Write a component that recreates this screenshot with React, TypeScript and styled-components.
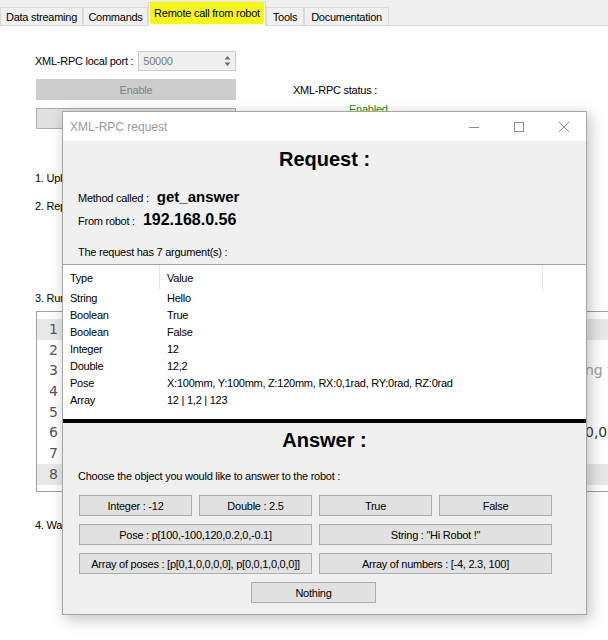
import * as React from 'react';
import styled, { createGlobalStyle } from 'styled-components';

const GlobalStyle = createGlobalStyle`
    html, body {
        margin: 0;
        padding: 0;
        background: #ffffff;
    }
    body {
        font-family: 'Liberation Sans', Arial, sans-serif;
        font-size: 11px;
        letter-spacing: -0.25px;
        color: #000000;
    }
`;

const Screen = styled.div`
    position: relative;
    width: 608px;
    height: 640px;
    overflow: hidden;
    background: #ffffff;
`;

/* ---------- main window (behind the dialog) ---------- */

const TabStrip = styled.div`
    display: flex;
    align-items: flex-end;
    height: 26px;
    box-sizing: border-box;
    background: #f0f0f0;
    border-bottom: 1px solid #d9d9d9;
`;

const Tab = styled.div<{ $width: number; $active?: boolean }>`
    box-sizing: border-box;
    flex: none;
    width: ${p => p.$width}px;
    height: ${p => (p.$active ? 24 : 18)}px;
    margin-bottom: ${p => (p.$active ? -1 : 0)}px;
    display: flex;
    align-items: center;
    justify-content: center;
    padding-bottom: ${p => (p.$active ? 3 : 0)}px;
    background: ${p => (p.$active ? '#ffffff' : '#f0f0f0')};
    border: 1px solid #d9d9d9;
    border-bottom: none;
    white-space: nowrap;
`;

const Marker = styled.span`
    background: #f6f61e;
    border-radius: 3px;
    padding: 5px 4px;
    box-shadow: 0 0 2px #f6f61e;
`;

const Page = styled.div`
    display: flex;
    flex-direction: column;
    align-items: flex-start;
    padding: 25px 0 0 35px;
`;

const PortRow = styled.div`
    display: flex;
    align-items: center;
    gap: 5px;
    height: 20px;
`;

const SpinBox = styled.div`
    box-sizing: border-box;
    width: 98px;
    height: 20px;
    display: flex;
    align-items: center;
    justify-content: space-between;
    padding: 0 3px 0 4px;
    background: #f0f0f0;
    border: 1px solid #cccccc;
    color: #7a7a7a;
`;

const ControlsRow = styled.div`
    display: flex;
    margin-top: 8px;
`;

const ButtonColumn = styled.div`
    display: flex;
    flex-direction: column;
    gap: 8px;
    margin-left: 1px;
    width: 200px;
`;

const WideButton = styled.div<{ $disabled?: boolean }>`
    box-sizing: border-box;
    height: 21px;
    display: flex;
    align-items: center;
    justify-content: center;
    background: ${p => (p.$disabled ? '#cccccc' : '#e1e1e1')};
    border: 1px solid ${p => (p.$disabled ? '#cccccc' : '#adadad')};
    color: ${p => (p.$disabled ? '#838383' : '#000000')};
`;

const StatusColumn = styled.div`
    display: flex;
    flex-direction: column;
    margin-left: 57px;
    padding-top: 4px;
    line-height: 14px;
`;

const StatusValue = styled.span`
    margin: 5px 0 0 56px;
    color: #169b16;
`;

const Step = styled.div<{ $top: number }>`
    margin-top: ${p => p.$top}px;
    line-height: 14px;
    white-space: nowrap;
`;

const Editor = styled.div`
    box-sizing: border-box;
    flex: none;
    width: 640px;
    height: 181px;
    margin: 6px 0 0 1px;
    padding-top: 7px;
    border: 1px solid #a0a0a0;
    font-family: 'DejaVu Sans', Verdana, sans-serif;
    font-size: 14px;
    letter-spacing: 0;
`;

const CodeLine = styled.div<{ $current?: boolean }>`
    display: flex;
    height: 20.7px;
    line-height: 20.7px;
    white-space: nowrap;
    background: ${p => (p.$current ? '#e8e8e8' : 'transparent')};
`;

const LineNo = styled.span`
    flex: none;
    width: 21px;
    padding-right: 4px;
    text-align: right;
    color: #555555;
`;

const Code = styled.span<{ $comment?: boolean }>`
    margin-left: 8px;
    color: ${p => (p.$comment ? '#a0a0a0' : '#333333')};
`;

const Lead = styled.span`
    display: inline-block;
    width: 515px;
    overflow: hidden;
    vertical-align: top;
`;

/* ---------- XML-RPC request dialog ---------- */

const Dialog = styled.div`
    position: absolute;
    left: 62px;
    top: 111px;
    width: 525px;
    height: 504px;
    box-sizing: border-box;
    display: flex;
    flex-direction: column;
    background: #f0f0f0;
    border: 1px solid #a6a6a6;
    box-shadow: 3px 4px 14px rgba(0, 0, 0, 0.25);
`;

const TitleBar = styled.div`
    flex: none;
    height: 29px;
    display: flex;
    align-items: center;
    background: #ffffff;
`;

const TitleText = styled.span`
    padding-left: 7px;
    font-size: 12px;
    letter-spacing: 0;
    color: #9a9a9a;
`;

const TitleControls = styled.div`
    display: flex;
    margin-left: auto;
`;

const TitleButton = styled.div`
    width: 45px;
    height: 29px;
    display: flex;
    align-items: center;
    justify-content: center;
`;

const Panel = styled.div`
    display: flex;
    flex-direction: column;
    align-items: flex-start;
    padding: 0 15px;
`;

const Heading = styled.h2<{ $top: number }>`
    align-self: stretch;
    margin: ${p => p.$top}px 0 0;
    font-size: 20px;
    line-height: 24px;
    font-weight: bold;
    letter-spacing: 0;
    text-align: center;
`;

const InfoRow = styled.div<{ $top: number }>`
    display: flex;
    align-items: baseline;
    gap: 8px;
    margin-top: ${p => p.$top}px;
    line-height: 20px;
`;

const InfoValue = styled.span<{ $size: number }>`
    font-size: ${p => p.$size}px;
    font-weight: bold;
    letter-spacing: 0;
`;

const Note = styled.div<{ $top: number }>`
    margin-top: ${p => p.$top}px;
    line-height: 14px;
`;

const ListView = styled.div`
    margin-top: 5px;
    height: 155px;
    box-sizing: border-box;
    background: #ffffff;
    border-top: 1px solid #a0a0a0;
`;

const ListHeader = styled.div`
    display: grid;
    grid-template-columns: 97px 383px 1fr;
    height: 25px;
`;

const HeaderCell = styled.div`
    display: flex;
    align-items: center;
    padding-left: 7px;
    border-right: 1px solid #e5e5e5;
    &:last-child {
        border-right: none;
    }
`;

const ListRow = styled.div`
    display: grid;
    grid-template-columns: 97px 1fr;
    height: 17px;
    line-height: 17px;
`;

const Cell = styled.div`
    padding-left: 7px;
    white-space: nowrap;
`;

const Splitter = styled.div`
    flex: none;
    height: 4px;
    background: #000000;
`;

const AnswerGrid = styled.div`
    display: grid;
    grid-template-columns: repeat(4, 113px);
    column-gap: 7px;
    row-gap: 8px;
    margin: 12px 0 0 1px;
`;

const AnswerButton = styled.div<{ $span?: number; $narrow?: boolean }>`
    box-sizing: border-box;
    height: 21px;
    display: flex;
    align-items: center;
    justify-content: center;
    grid-column: ${p => (p.$narrow ? '1 / -1' : `span ${p.$span ?? 1}`)};
    justify-self: ${p => (p.$narrow ? 'center' : 'stretch')};
    width: ${p => (p.$narrow ? '125px' : 'auto')};
    margin-left: ${p => (p.$narrow ? '-4px' : '0')};
    background: #e1e1e1;
    border: 1px solid #adadad;
    white-space: nowrap;
`;

const tabs = [
    { label: 'Data streaming', width: 83 },
    { label: 'Commands', width: 65 },
    { label: 'Remote call from robot', width: 118, active: true },
    { label: 'Tools', width: 38 },
    { label: 'Documentation', width: 85 },
];

const args = [
    ['String', 'Hello'],
    ['Boolean', 'True'],
    ['Boolean', 'False'],
    ['Integer', '12'],
    ['Double', '12,2'],
    ['Pose', 'X:100mm, Y:100mm, Z:120mm, RX:0,1rad, RY:0rad, RZ:0rad'],
    ['Array', '12 | 1,2 | 123'],
];

const answers = [
    { label: 'Integer : -12' },
    { label: 'Double : 2.5' },
    { label: 'True' },
    { label: 'False' },
    { label: 'Pose : p[100,-100,120,0.2,0,-0.1]', span: 2 },
    { label: 'String : "Hi Robot !"', span: 2 },
    { label: 'Array of poses : [p[0,1,0,0,0,0], p[0,0,1,0,0,0]]', span: 2 },
    { label: 'Array of numbers : [-4, 2.3, 100]', span: 2 },
];

const SpinArrows = () => (
    <svg width="9" height="14" viewBox="0 0 9 14">
        <path d="M4.5 2 L7.5 5.5 L1.5 5.5 Z" fill="#6a6a6a" />
        <path d="M4.5 12 L7.5 8.5 L1.5 8.5 Z" fill="#6a6a6a" />
    </svg>
);

const App = () => {
    return (
        <Screen>
            <GlobalStyle />
            <TabStrip>
                {tabs.map(t => (
                    <Tab key={t.label} $width={t.width} $active={t.active}>
                        {t.active ? <Marker>{t.label}</Marker> : t.label}
                    </Tab>
                ))}
            </TabStrip>

            <Page>
                <PortRow>
                    <span>XML-RPC local port :</span>
                    <SpinBox>
                        <span>50000</span>
                        <SpinArrows />
                    </SpinBox>
                </PortRow>
                <ControlsRow>
                    <ButtonColumn>
                        <WideButton $disabled>Enable</WideButton>
                        <WideButton>Disable</WideButton>
                    </ButtonColumn>
                    <StatusColumn>
                        <span>XML-RPC status :</span>
                        <StatusValue>Enabled</StatusValue>
                    </StatusColumn>
                </ControlsRow>

                <Step $top={42}>1. Upload the example program to the robot</Step>
                <Step $top={14}>2. Replace the IP address in the program with the IP of this computer</Step>
                <Step $top={78}>3. Run the program on the robot :</Step>
                <Editor>
                    <CodeLine $current>
                        <LineNo>1</LineNo>
                        <Code>def get_answer_example():</Code>
                    </CodeLine>
                    <CodeLine>
                        <LineNo>2</LineNo>
                        <Code>  rpc = rpc_factory("xmlrpc", "http://pc:50000")</Code>
                    </CodeLine>
                    <CodeLine>
                        <LineNo>3</LineNo>
                        <Code $comment>
                            <Lead>  # The robot calls the computer and is waiti</Lead>ng the answer
                        </Code>
                    </CodeLine>
                    <CodeLine>
                        <LineNo>4</LineNo>
                        <Code>  pose = p[0.1, 0.1, 0.12, 0.1, 0, 0]</Code>
                    </CodeLine>
                    <CodeLine>
                        <LineNo>5</LineNo>
                        <Code>  values = [12, 1.2, 123]</Code>
                    </CodeLine>
                    <CodeLine>
                        <LineNo>6</LineNo>
                        <Code>
                            <Lead>  answer = rpc.get_answer("Hello", True, False, 12, p[0,</Lead>0,0,0,0,0])
                        </Code>
                    </CodeLine>
                    <CodeLine>
                        <LineNo>7</LineNo>
                        <Code>  textmsg(answer)</Code>
                    </CodeLine>
                    <CodeLine $current>
                        <LineNo>8</LineNo>
                        <Code>end</Code>
                    </CodeLine>
                </Editor>
                <Step $top={26}>4. Wait for the robot to call the computer</Step>
            </Page>

            <Dialog>
                <TitleBar>
                    <TitleText>XML-RPC request</TitleText>
                    <TitleControls>
                        <TitleButton>
                            <svg width="10" height="10" viewBox="0 0 10 10">
                                <line x1="0" y1="5.5" x2="10" y2="5.5" stroke="#8c8c8c" />
                            </svg>
                        </TitleButton>
                        <TitleButton>
                            <svg width="10" height="10" viewBox="0 0 10 10">
                                <rect x="0.5" y="0.5" width="9" height="9" fill="none" stroke="#8c8c8c" />
                            </svg>
                        </TitleButton>
                        <TitleButton>
                            <svg width="10" height="10" viewBox="0 0 10 10">
                                <path d="M0 0 L10 10 M10 0 L0 10" stroke="#8c8c8c" />
                            </svg>
                        </TitleButton>
                    </TitleControls>
                </TitleBar>

                <Panel>
                    <Heading $top={6}>Request :</Heading>
                    <InfoRow $top={16}>
                        <span>Method called :</span>
                        <InfoValue $size={15}>get_answer</InfoValue>
                    </InfoRow>
                    <InfoRow $top={2}>
                        <span>From robot :</span>
                        <InfoValue $size={16}>192.168.0.56</InfoValue>
                    </InfoRow>
                    <Note $top={14}>The request has 7 argument(s) :</Note>
                </Panel>

                <ListView>
                    <ListHeader>
                        <HeaderCell>Type</HeaderCell>
                        <HeaderCell>Value</HeaderCell>
                        <HeaderCell />
                    </ListHeader>
                    {args.map(([type, value], i) => (
                        <ListRow key={i}>
                            <Cell>{type}</Cell>
                            <Cell>{value}</Cell>
                        </ListRow>
                    ))}
                </ListView>
                <Splitter />

                <Panel>
                    <Heading $top={5}>Answer :</Heading>
                    <Note $top={17}>Choose the object you would like to answer to the robot :</Note>
                    <AnswerGrid>
                        {answers.map(a => (
                            <AnswerButton key={a.label} $span={a.span}>
                                {a.label}
                            </AnswerButton>
                        ))}
                        <AnswerButton $narrow>Nothing</AnswerButton>
                    </AnswerGrid>
                </Panel>
            </Dialog>
        </Screen>
    );
};

export default App;
